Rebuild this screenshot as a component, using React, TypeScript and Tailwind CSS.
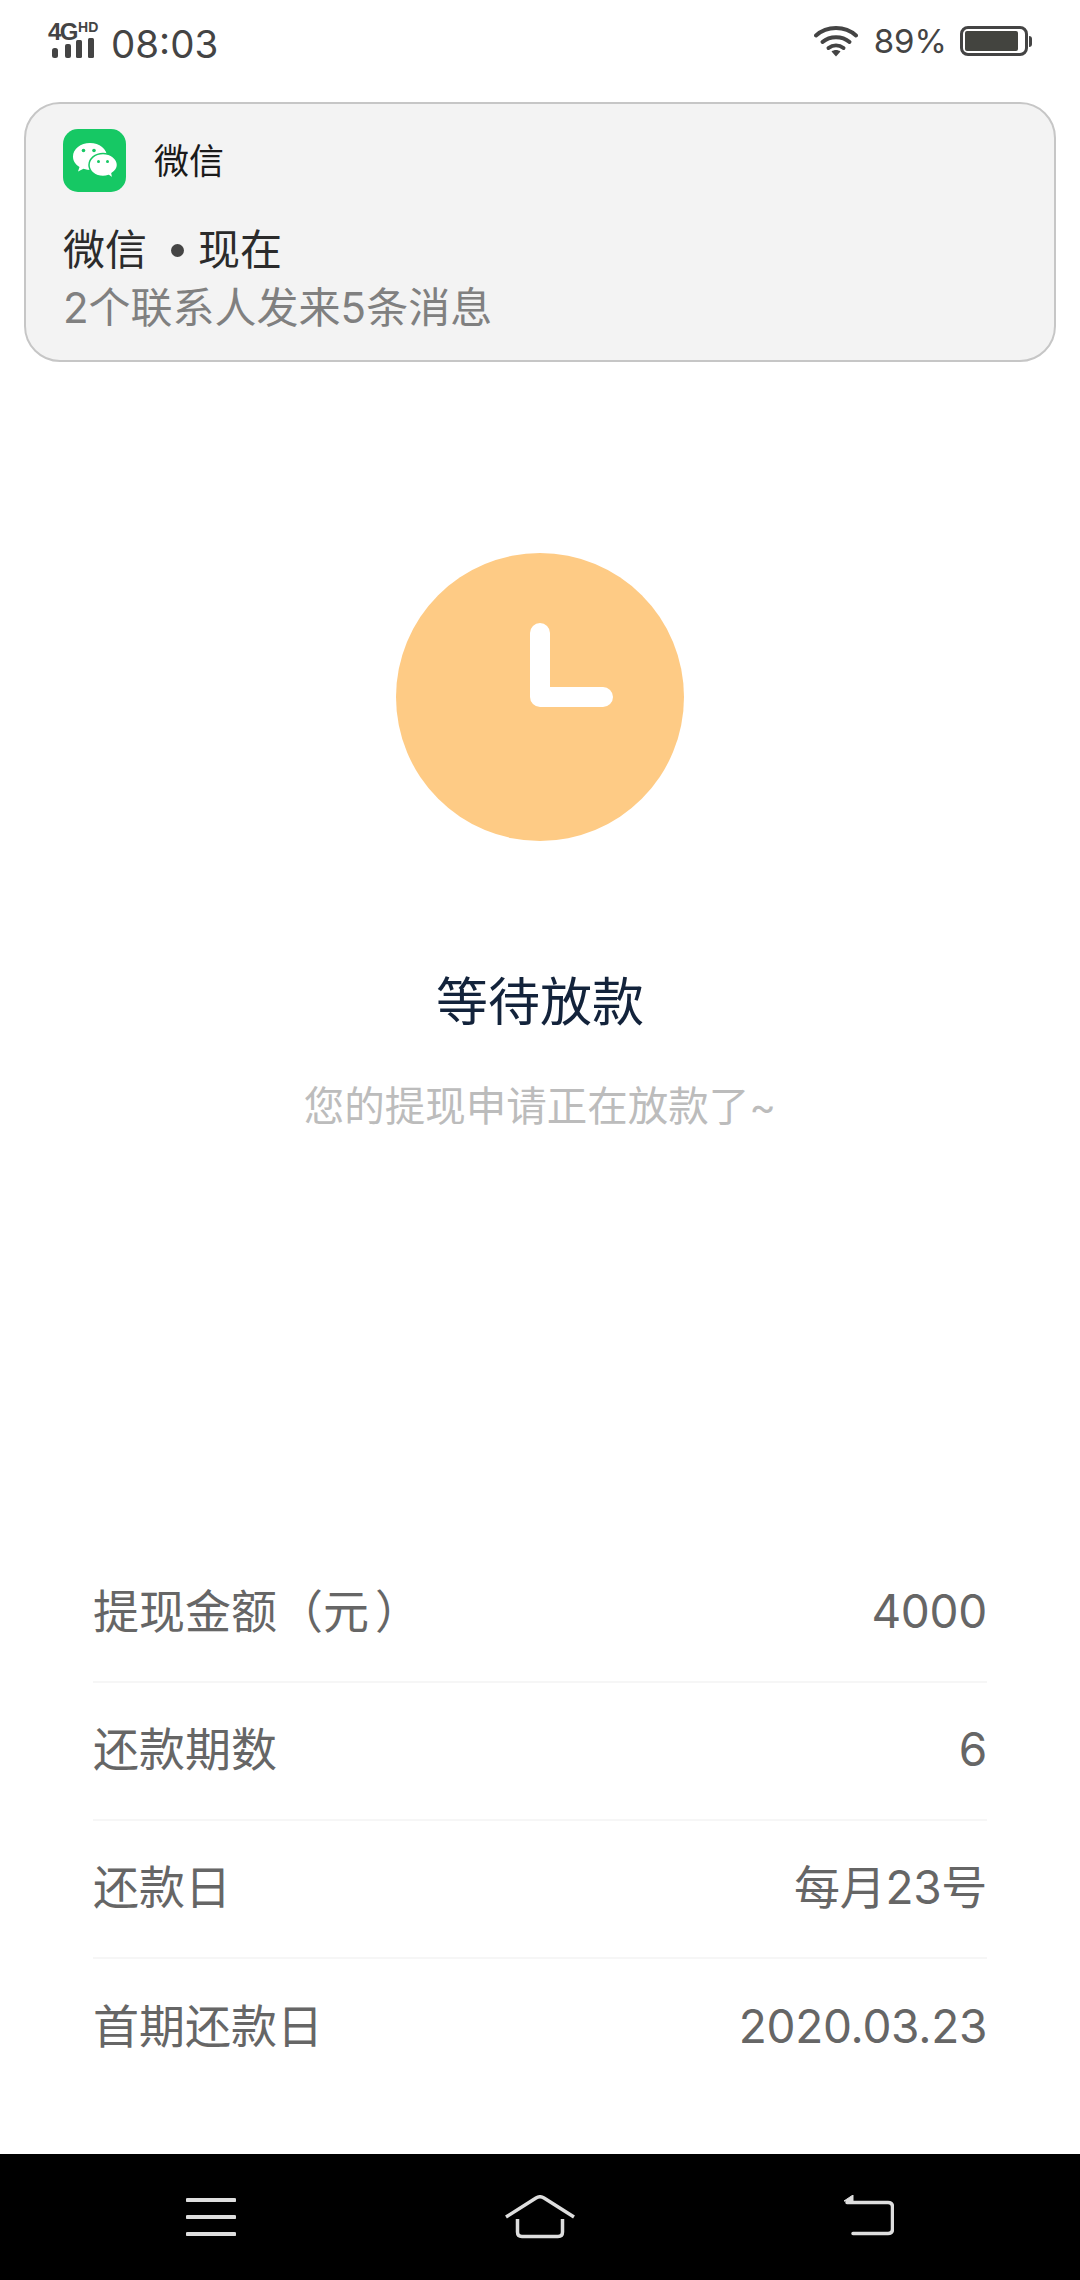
import React from "react";

const ui = "font-['Inter','Noto_Sans_CJK_SC','Noto_Sans',sans-serif]";

const rows: { label: React.ReactNode; value: string }[] = [
  {
    label: (
      <>
        提现金额（元<span className="ml-[6px]">）</span>
      </>
    ),
    value: "4000",
  },
  { label: "还款期数", value: "6" },
  { label: "还款日", value: "每月23号" },
  { label: "首期还款日", value: "2020.03.23" },
];

function SignalBars() {
  return (
    <svg width="48" height="20" viewBox="0 0 48 20" fill="#444">
      <rect x="4" y="10" width="6" height="10" rx="2.500" />
      <rect x="17" y="6" width="6" height="14" rx="2" />
      <rect x="28" y="2" width="6" height="18" rx="1.500" />
      <rect x="40" y="0" width="6" height="20" rx="1.500" />
    </svg>
  );
}

function WifiIcon() {
  return (
    <svg width="44" height="32" viewBox="0 0 44 32" fill="none" stroke="#444" strokeWidth="4" strokeLinecap="round">
      <path d="M2 10.500C13 0.500 31 0.500 42 10.500" />
      <path d="M8.500 17C16 10.500 28 10.500 35.500 17" />
      <path d="M14.500 23C19 19.500 25 19.500 29.500 23" />
      <path d="M17.500 26.500L22 31.500L26.500 26.500C24 24.500 20 24.500 17.500 26.500Z" fill="#444" stroke="none" />
    </svg>
  );
}

function Battery() {
  return (
    <div className="flex items-center">
      <div className="w-[68px] h-[30px] rounded-[8px] border-[3px] border-[#444] p-[2px] pr-[7px]">
        <div className="w-full h-full bg-[#43443f] rounded-[2px]" />
      </div>
      <div className="w-[3px] h-[11px] bg-[#444] rounded-r-[3px] ml-[1px]" />
    </div>
  );
}

function WeChatLogo() {
  return (
    <div className="w-[63px] h-[63px] rounded-[15px] bg-[#16c864] flex items-center justify-center">
      <svg width="46" height="38" viewBox="0 0 46 38">
        <path d="M18 1C8.500 1 1 7 1 14.500C1 19 3.500 22.500 7.500 25L6 29.500L11.500 26.800C14 27.600 16.500 28 19 28C30 28 35 21 35 14.500C35 7 27.500 1 18 1Z" fill="#fff" />
        <path d="M31 11.500C23 11.500 17 16.700 17 23C17 29.300 23 34.500 31 34.500C33 34.500 35 34.100 36.800 33.500L41 36.500L40 31.500C43.500 29.200 45.500 26.300 45.500 23C45.500 16.700 39 11.500 31 11.500Z" fill="#fff" stroke="#16c864" strokeWidth="1.500" />
        <circle cx="11.500" cy="8.500" r="1.800" fill="#16c864" />
        <circle cx="22" cy="8.500" r="1.800" fill="#16c864" />
        <circle cx="26.500" cy="19.500" r="1.500" fill="#16c864" />
        <circle cx="35.500" cy="19.500" r="1.500" fill="#16c864" />
      </svg>
    </div>
  );
}

function ClockIcon() {
  return (
    <div className="w-[288px] h-[288px] rounded-full bg-[#fecb85] flex items-center justify-center">
      <svg width="288" height="288" viewBox="0 0 288 288" fill="none">
        <path d="M144 80V144H207" stroke="#fff" strokeWidth="20" strokeLinecap="round" strokeLinejoin="round" />
      </svg>
    </div>
  );
}

function NavBar() {
  return (
    <div className="h-[126px] bg-black flex items-start justify-between pl-[186px] pr-[186px] pt-[41px]">
      <svg width="50" height="42" viewBox="0 0 50 42" stroke="#dedede" strokeWidth="4" strokeLinecap="round" fill="none">
        <path d="M1.500 5H48.500" />
        <path d="M1.500 22H48.500" />
        <path d="M1.500 39H48.500" />
      </svg>
      <svg width="70" height="44" viewBox="0 0 70 44" stroke="#dedede" strokeWidth="3.500" fill="none">
        <path d="M1 22L31 3Q35 0.500 39 3L69 22" />
        <path d="M12.500 24V37Q12.500 41.500 17 41.500H53Q57.500 41.500 57.500 37V24" />
      </svg>
      <svg width="50" height="42" viewBox="0 0 50 42" fill="none">
        <path d="M0 6L9 0V6Z" fill="#dedede" stroke="#dedede" />
        <path d="M3 7.500H44Q48.500 7.500 48.500 12V34Q48.500 38.500 44 38.500H9" stroke="#dedede" strokeWidth="3.500" strokeLinecap="round" />
      </svg>
    </div>
  );
}

export default function App() {
  return (
    <div className={`w-[1080px] h-[2280px] bg-white flex flex-col ${ui}`}>
      {/* Status bar */}
      <div className="h-[102px] shrink-0 flex items-start justify-between pl-[48px] pr-[48px] pt-[21px] text-[#444]">
        <div className="flex items-start">
          <div className="w-[53px] flex flex-col">
            <div className="flex items-start h-[17px] font-bold font-['Liberation_Sans',sans-serif]">
              <span className="text-[24px] leading-[22px] tracking-[-1.5px]">4G</span>
              <span className="text-[14px] leading-[12px] ml-[1px]">HD</span>
            </div>
            <SignalBars />
          </div>
          <span className="ml-[10px] text-[38.500px] leading-[46px]">08:03</span>
        </div>
        <div className="flex items-center pt-[4px]">
          <WifiIcon />
          <span className="ml-[16px] mr-[13px] text-[33px] leading-[32px]">89%</span>
          <Battery />
        </div>
      </div>

      {/* Notification */}
      <div className="mx-[24px] h-[260px] shrink-0 rounded-[36px] border-2 border-[#c6c6c6] bg-[#f3f3f3] pl-[37px] pt-[25px]">
        <div className="flex items-center">
          <WeChatLogo />
          <span className="ml-[28px] text-[35px] leading-[50px] text-[#1a1a1a]">微信</span>
        </div>
        <div className="mt-[31px] flex items-center text-[42px] leading-[54px] text-[#2b2b2b]">
          <span>微信</span>
          <span className="ml-[24px] w-[13px] h-[13px] rounded-full bg-[#444]" />
          <span className="ml-[14px]">现在</span>
        </div>
        <div className="mt-[3px] text-[42px] leading-[56px] text-[#808080]">2个联系人发来5条消息</div>
      </div>

      {/* Status */}
      <div className="mt-[191px] flex flex-col items-center">
        <ClockIcon />
        <div className="mt-[125px] text-[52px] leading-[74px] text-[#13233b]">等待放款</div>
        <div className="mt-[38px] text-[40.500px] leading-[58px] text-[#bcbcbc]">您的提现申请正在放款了~</div>
      </div>

      {/* Details */}
      <div className="mt-auto mx-[93px] mb-[57px]">
        {rows.map((row, i) => (
          <div
            key={i}
            className={`h-[138px] pb-[4px] flex items-center justify-between text-[46px] text-[#666] ${
              i < rows.length - 1 ? "border-b-2 border-[#f6f6f6]" : ""
            }`}
          >
            <span>{row.label}</span>
            <span className="tracking-[-0.3px]">{row.value}</span>
          </div>
        ))}
      </div>

      <NavBar />
    </div>
  );
}
